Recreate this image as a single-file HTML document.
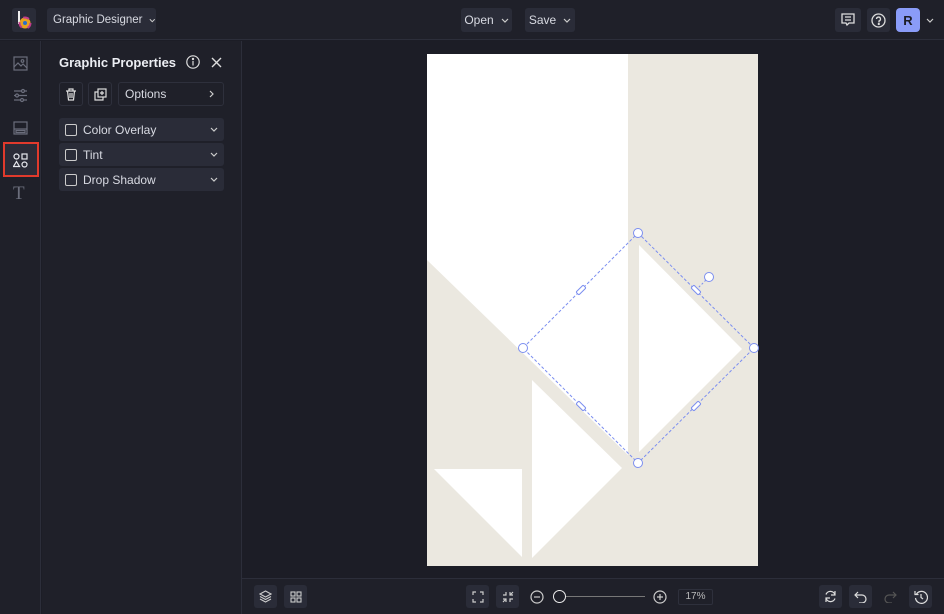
<!DOCTYPE html><html><head><style>
*{box-sizing:border-box;margin:0;padding:0}
body{width:944px;height:614px;background:#1c1d26;font-family:"Liberation Sans",sans-serif;color:#d8dae2;position:relative;overflow:hidden;font-size:12px}
.a{position:absolute}
.btn{position:absolute;background:#2a2c38;border-radius:3px;display:flex;align-items:center;justify-content:center;white-space:nowrap}
svg{display:block}
.ch{margin-left:7px}
</style></head><body>
<div class="a" style="left:0;top:0;width:944px;height:40px;background:#1f2029;border-bottom:1px solid #2c2e3a"></div>
<div class="btn" style="left:12px;top:8px;width:24px;height:24px">
<svg width="18" height="20" viewBox="0 0 18 20"><path d="M4 1v13" stroke="#eee" stroke-width="2"/><circle cx="10" cy="13" r="5.5" fill="#e8a020"/><circle cx="10" cy="13" r="5.5" fill="none" stroke="#c03c8c" stroke-width="2" stroke-dasharray="6 6"/><circle cx="10" cy="13" r="2" fill="#2a6ec8"/></svg></div>
<div class="btn" style="left:47px;top:8px;width:109px;height:24px;font-size:11.5px;color:#d8dae2;justify-content:flex-start;padding-left:6px">Graphic Designer <svg class="ch" width="8" height="5" viewBox="0 0 8 5" fill="none" stroke="#ccc" stroke-width="1.2"><path d="M1 1l3 3 3-3"/></svg></div>
<div class="btn" style="left:461px;top:8px;width:51px;height:24px">Open <svg class="ch" width="8" height="5" viewBox="0 0 8 5" fill="none" stroke="#ccc" stroke-width="1.2"><path d="M1 1l3 3 3-3"/></svg></div>
<div class="btn" style="left:525px;top:8px;width:50px;height:24px">Save <svg class="ch" width="8" height="5" viewBox="0 0 8 5" fill="none" stroke="#ccc" stroke-width="1.2"><path d="M1 1l3 3 3-3"/></svg></div>
<div class="btn" style="left:835px;top:8px;width:26px;height:24px"><svg width="14" height="14" viewBox="0 0 14 14" fill="none" stroke="#ddd" stroke-width="1.3"><path d="M1 1h12v9H8l-2 2-1-2H1z"/><path d="M4 4h6M4 7h6"/></svg></div>
<div class="btn" style="left:867px;top:8px;width:23px;height:24px"><svg width="15" height="15" viewBox="0 0 15 15" fill="none" stroke="#ddd" stroke-width="1.3"><circle cx="7.5" cy="7.5" r="6.5"/><path d="M5.5 6a2 2 0 1 1 2.5 2v1.5"/><circle cx="7.8" cy="11" r=".5" fill="#ddd"/></svg></div>
<div class="a" style="left:896px;top:8px;width:24px;height:24px;background:#8a9cf8;border-radius:4px;color:#1c1d26;font-weight:bold;font-size:13px;display:flex;align-items:center;justify-content:center">R</div>
<svg class="a" style="left:926px;top:18px" width="8" height="5" viewBox="0 0 8 5" fill="none" stroke="#ccc" stroke-width="1.2"><path d="M1 1l3 3 3-3"/></svg>

<div class="a" style="left:0;top:41px;width:41px;height:573px;background:#1f2029;border-right:1px solid #2c2e3a"></div>
<svg class="a" style="left:13px;top:56px" width="15" height="15" viewBox="0 0 15 15" fill="none" stroke="#6b6e7c" stroke-width="1.2"><rect x="1" y="1" width="13" height="13"/><path d="M1 11l4-4 3 3 2-2 4 4"/><circle cx="9.5" cy="5" r="1.3"/></svg>
<svg class="a" style="left:13px;top:88px" width="15" height="15" viewBox="0 0 15 15" fill="none" stroke="#6b6e7c" stroke-width="1.2"><path d="M1 3h13M1 7.5h13M1 12h13"/><circle cx="10" cy="3" r="1.5" fill="#1f2029"/><circle cx="4" cy="7.5" r="1.5" fill="#1f2029"/><circle cx="9" cy="12" r="1.5" fill="#1f2029"/></svg>
<svg class="a" style="left:13px;top:121px" width="15" height="14" viewBox="0 0 15 14" fill="none" stroke="#6b6e7c" stroke-width="1.2"><rect x="1" y="1" width="13" height="12"/><path d="M1 8h13"/><rect x="3" y="9.5" width="9" height="2"/></svg>
<div class="a" style="left:3px;top:142px;width:36px;height:35px;border:2px solid #e03a2c;background:#2a2c38"></div>
<svg class="a" style="left:13px;top:153px" width="15" height="15" viewBox="0 0 15 15" fill="none" stroke="#e6e8ee" stroke-width="1.2"><circle cx="3.5" cy="3.5" r="2.5"/><rect x="9" y="1" width="5" height="5"/><path d="M3.5 8.5l3 5h-6z"/><circle cx="11.5" cy="11.5" r="2.5"/></svg>
<div class="a" style="left:13px;top:183px;font-family:'Liberation Serif',serif;font-size:19px;color:#6b6e7c">T</div>

<div class="a" style="left:42px;top:41px;width:200px;height:573px;background:#1f2029;border-right:1px solid #2c2e3a"></div>
<div class="a" style="left:59px;top:55px;font-size:13px;font-weight:bold;color:#eceef3">Graphic Properties</div>
<svg class="a" style="left:186px;top:55px" width="14" height="14" viewBox="0 0 14 14" fill="none" stroke="#ddd" stroke-width="1.2"><circle cx="7" cy="7" r="6.2"/><path d="M7 6v4.5"/><circle cx="7" cy="4" r=".6" fill="#ddd"/></svg>
<svg class="a" style="left:211px;top:57px" width="11" height="11" viewBox="0 0 11 11" stroke="#ddd" stroke-width="1.4"><path d="M1 1l9 9M10 1l-9 9"/></svg>
<div class="btn" style="left:59px;top:82px;width:24px;height:24px;background:#1f2029;border:1px solid #2e303c"><svg width="12" height="13" viewBox="0 0 12 13" fill="none" stroke="#ddd" stroke-width="1.2"><path d="M1 3h10M4 3V1h4v2M2.5 3l1 9h5l1-9M5 5v5M7 5v5"/></svg></div>
<div class="btn" style="left:88px;top:82px;width:24px;height:24px;background:#1f2029;border:1px solid #2e303c"><svg width="13" height="13" viewBox="0 0 13 13" fill="none" stroke="#ddd" stroke-width="1.2"><rect x="4" y="1" width="8" height="8"/><path d="M4 4H1v8h8V9M8 3v4M6 5h4"/></svg></div>
<div class="btn" style="left:118px;top:82px;width:106px;height:24px;background:#1f2029;border:1px solid #2e303c;justify-content:space-between;padding:0 9px 0 6px"><span>Options</span><svg width="5" height="8" viewBox="0 0 5 8" fill="none" stroke="#ccc" stroke-width="1.2"><path d="M1 1l3 3-3 3"/></svg></div>
<div class="btn" style="left:59px;top:118px;width:165px;height:23px;justify-content:flex-start;padding-left:6px"><span style="width:12px;height:12px;border:1.3px solid #ccc;border-radius:2px;margin-right:6px"></span>Color Overlay<svg style="margin-left:auto;margin-right:6px" width="8" height="5" viewBox="0 0 8 5" fill="none" stroke="#ccc" stroke-width="1.2"><path d="M1 1l3 3 3-3"/></svg></div>
<div class="btn" style="left:59px;top:143px;width:165px;height:23px;justify-content:flex-start;padding-left:6px"><span style="width:12px;height:12px;border:1.3px solid #ccc;border-radius:2px;margin-right:6px"></span>Tint<svg style="margin-left:auto;margin-right:6px" width="8" height="5" viewBox="0 0 8 5" fill="none" stroke="#ccc" stroke-width="1.2"><path d="M1 1l3 3 3-3"/></svg></div>
<div class="btn" style="left:59px;top:168px;width:165px;height:23px;justify-content:flex-start;padding-left:6px"><span style="width:12px;height:12px;border:1.3px solid #ccc;border-radius:2px;margin-right:6px"></span>Drop Shadow<svg style="margin-left:auto;margin-right:6px" width="8" height="5" viewBox="0 0 8 5" fill="none" stroke="#ccc" stroke-width="1.2"><path d="M1 1l3 3 3-3"/></svg></div>

<svg class="a" style="left:0;top:0" width="944" height="614">
<rect x="427" y="54" width="331" height="512" fill="#ebe8e0"/>
<polygon points="427,54 628,54 628,455 427,260" fill="#fff"/>
<polygon points="639,245 742,349 639,452" fill="#fff"/>
<polygon points="532,380 622,468 532,558" fill="#fff"/>
<polygon points="434,469 522,469 522,557" fill="#fff"/>
<polygon points="638,233 754,348 638,463 523,348" fill="none" stroke="#7b8ef0" stroke-width="1" stroke-dasharray="3 2"/>
<line x1="696" y1="290" x2="709" y2="277" stroke="#7b8ef0" stroke-dasharray="2 2"/>
<g fill="#fff" stroke="#7b8ef0" stroke-width="1">
<circle cx="638" cy="233" r="4.5"/><circle cx="754" cy="348" r="4.5"/><circle cx="638" cy="463" r="4.5"/><circle cx="523" cy="348" r="4.5"/><circle cx="709" cy="277" r="4.5"/>
<rect x="-5" y="-2" width="10" height="4" rx="1" transform="translate(581,290) rotate(-45)"/>
<rect x="-5" y="-2" width="10" height="4" rx="1" transform="translate(696,290) rotate(45)"/>
<rect x="-5" y="-2" width="10" height="4" rx="1" transform="translate(581,406) rotate(45)"/>
<rect x="-5" y="-2" width="10" height="4" rx="1" transform="translate(696,406) rotate(-45)"/>
</g></svg>

<div class="a" style="left:242px;top:578px;width:702px;height:36px;background:#1f2029;border-top:1px solid #2c2e3a"></div>
<div class="btn" style="left:254px;top:585px;width:23px;height:23px"><svg width="13" height="13" viewBox="0 0 13 13" fill="none" stroke="#ccc" stroke-width="1.1"><path d="M6.5 1l5.5 3-5.5 3L1 4z"/><path d="M1 6.5l5.5 3 5.5-3M1 9l5.5 3 5.5-3"/></svg></div>
<div class="btn" style="left:284px;top:585px;width:23px;height:23px"><svg width="12" height="12" viewBox="0 0 12 12" fill="none" stroke="#ccc" stroke-width="1.1"><rect x="1" y="1" width="4" height="4"/><rect x="7" y="1" width="4" height="4"/><rect x="1" y="7" width="4" height="4"/><rect x="7" y="7" width="4" height="4"/></svg></div>
<div class="btn" style="left:466px;top:585px;width:23px;height:23px"><svg width="12" height="12" viewBox="0 0 12 12" fill="none" stroke="#ccc" stroke-width="1.2"><path d="M1 4V1h3M8 1h3v3M11 8v3H8M4 11H1V8"/></svg></div>
<div class="btn" style="left:496px;top:585px;width:23px;height:23px"><svg width="12" height="12" viewBox="0 0 12 12" fill="none" stroke="#ccc" stroke-width="1.2"><path d="M1 4h3V1M8 1v3h3M11 8H8v3M4 11V8H1M8 4l3-3M4 8l-3 3"/></svg></div>
<svg class="a" style="left:530px;top:590px" width="14" height="14" viewBox="0 0 14 14" fill="none" stroke="#ccc" stroke-width="1.2"><circle cx="7" cy="7" r="6"/><path d="M4 7h6"/></svg>
<div class="a" style="left:565px;top:596px;width:80px;height:1px;background:#777"></div>
<div class="a" style="left:553px;top:590px;width:13px;height:13px;border-radius:50%;border:1.5px solid #eee;background:#1f2029"></div>
<svg class="a" style="left:653px;top:590px" width="14" height="14" viewBox="0 0 14 14" fill="none" stroke="#ccc" stroke-width="1.2"><circle cx="7" cy="7" r="6"/><path d="M4 7h6M7 4v6"/></svg>
<div class="a" style="left:678px;top:589px;width:35px;height:16px;border:1px solid #2e303c;border-radius:2px;font-size:10px;color:#bbb;text-align:center;line-height:14px">17%</div>
<div class="btn" style="left:819px;top:585px;width:23px;height:23px"><svg width="13" height="13" viewBox="0 0 13 13" fill="none" stroke="#ddd" stroke-width="1.2"><path d="M11 5a4.7 4.7 0 0 0-9-0.5M2 8a4.7 4.7 0 0 0 9 .5M11 1v4H7M2 12V8h4"/></svg></div>
<div class="btn" style="left:849px;top:585px;width:23px;height:23px"><svg width="13" height="12" viewBox="0 0 13 12" fill="none" stroke="#ddd" stroke-width="1.2"><path d="M4 1L1 4l3 3M1 4h7a4 4 0 0 1 0 8H5"/></svg></div>
<svg class="a" style="left:884px;top:591px" width="13" height="12" viewBox="0 0 13 12" fill="none" stroke="#555" stroke-width="1.2"><path d="M9 1l3 3-3 3M12 4H5a4 4 0 0 0 0 8h3"/></svg>
<div class="btn" style="left:909px;top:585px;width:23px;height:23px"><svg width="14" height="14" viewBox="0 0 14 14" fill="none" stroke="#ddd" stroke-width="1.2"><path d="M2.5 4A6 6 0 1 1 1.5 8M1 1v3.5h3.5M7 4v3.5l2 1.5"/></svg></div>
</body></html>
